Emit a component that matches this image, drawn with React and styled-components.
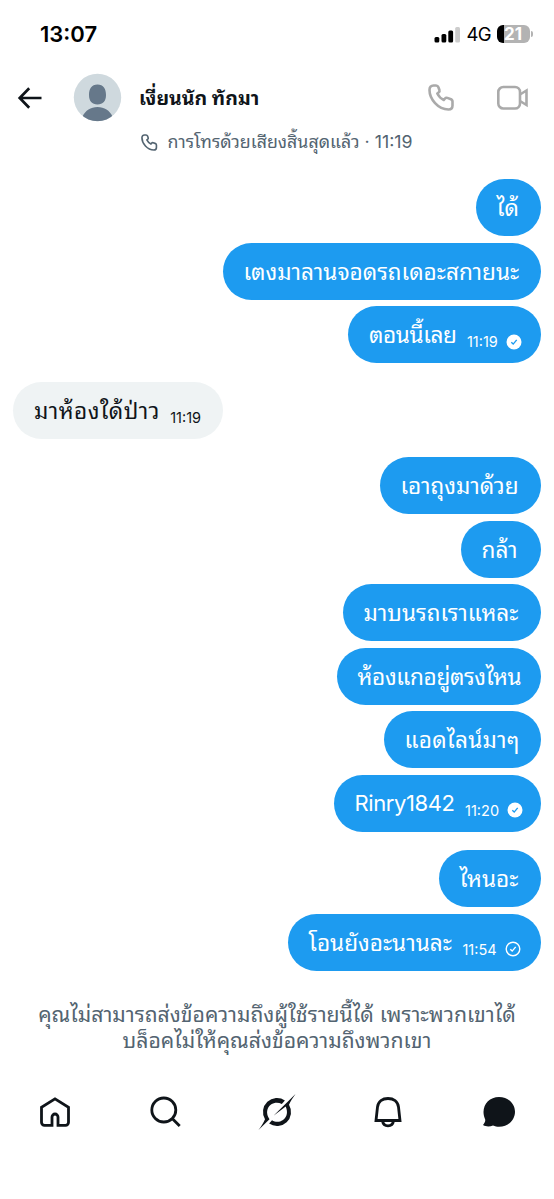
import styled, { createGlobalStyle } from 'styled-components';

const GlobalStyle = createGlobalStyle`
  * {
    box-sizing: border-box;
  }
  body {
    margin: 0;
    background: #fff;
    color: #0f1419;
    font-family: Inter, 'Noto Sans Thai Looped', Loma, Garuda, Umpush, Waree, 'Noto Sans Thai', 'Noto Sans', sans-serif;
  }
  svg {
    display: block;
    flex: none;
    overflow: visible;
  }
`
const StyledScreen = styled.div`
  display: flex;
  flex-direction: column;
  width: 554px;
  height: 1199px;
  overflow: hidden;
`
const StyledStatusBar = styled.div`
  display: flex;
  align-items: center;
  justify-content: space-between;
  height: 68px;
  padding: 0 21.5px 0 40px;
  color: #000;
`
const StyledClock = styled.div`
  font-size: 22px;
  font-weight: 600;
`
const StyledStatusIcons = styled.div`
  display: flex;
  align-items: center;
`
const StyledNetwork = styled.span`
  width: 24px;
  margin: 0 6px 0 7px;
  font-size: 18.5px;
  font-weight: 400;
  letter-spacing: -0.6px;
`
const StyledBattery = styled.div`
  width: 33px;
  height: 18px;
  border-radius: 6px;
  background: linear-gradient(to right, #000 7px, #b3b3b3 7px);
  color: #fff;
  font-size: 17px;
  font-weight: 700;
  line-height: 18px;
  text-align: center;
`
const StyledBatteryCap = styled.div`
  width: 2px;
  height: 6px;
  margin: 0 0 0 1px;
  border-radius: 0 2px 2px 0;
  background: #b3b3b3;
`
const StyledHeader = styled.div`
  display: flex;
  align-items: center;
  height: 59px;
  padding: 0 25px 0 16px;
`
const StyledAvatar = styled.div`
  margin: 0 18px 0 30px;
`
const StyledName = styled.div`
  flex: 1;
  font-size: 19.5px;
  line-height: 24px;
  font-weight: 700;
  white-space: nowrap;
`
const StyledCalls = styled.div`
  display: flex;
  align-items: center;
  gap: 41px;
`
const StyledCallEnded = styled.div`
  display: flex;
  align-items: center;
  justify-content: center;
  gap: 9px;
  height: 30px;
  color: #536471;
  font-size: 17.8px;
  line-height: 22px;
  white-space: nowrap;
`
const StyledMessages = styled.div`
  display: flex;
  flex-direction: column;
  margin: 22px 13.5px 0 13px;
`
const StyledBubble = styled.div`
  display: flex;
  align-items: center;
  align-self: ${props => props.$incoming ? 'flex-start' : 'flex-end'};
  flex: none;
  width: ${props => props.$width}px;
  height: 57px;
  margin: 0 0 ${props => props.$gap || 6.5}px;
  padding: 0 0 0 21px;
  border-radius: 29px;
  background: ${props => props.$incoming ? '#eff3f4' : '#1d9bf0'};
  color: ${props => props.$incoming ? '#0f1419' : '#fff'};
  white-space: nowrap;
`
const StyledText = styled.span`
  font-size: ${props => props.$size || 22.6}px;
  line-height: 27px;
  letter-spacing: ${props => props.$tracking || 0}px;
`
const StyledTime = styled.span`
  margin: 14px 0 0 10.5px;
  font-size: 14.5px;
`
const StyledStatus = styled.span`
  margin: 14px 0 0 8px;
`
const StyledNotice = styled.div`
  margin: 24px 0 0;
  color: #536471;
  font-size: 21.2px;
  line-height: 26px;
  text-align: center;
  white-space: nowrap;
`
const StyledTabBar = styled.div`
  display: grid;
  grid-template-columns: repeat(5, 1fr);
  align-items: center;
  justify-items: center;
  height: 60px;
  margin: 29px 0 0;
`

const PHONE = 'M1.5 6C1.5 3.2 3 1.5 5.5 1.5H8c1.3 0 2 .6 2.4 1.700l1 2.800c.4 1.100.1 1.800-.8 2.500l-1.300 1c1.500 3 3.700 5.200 6.500 6.500l1-1.300c.7-.9 1.500-1.200 2.600-.8l2.900 1c1.200.4 2.200 1.200 2.200 2.500v4.100c0 2.500-1.500 4-4 4C10 25.500 1.500 15 1.500 6z'

const PhoneIcon = ({ size, color, stroke }) => (
  <svg width={size} height={size} viewBox="0 0 27 27" fill="none" stroke={color} strokeWidth={stroke} strokeLinejoin="round">
    <path d={PHONE} />
  </svg>
)

const StatusIcon = ({ read }) => (
  <StyledStatus>
    <svg width="16" height="16" viewBox="0 0 16 16" fill="none">
      <circle cx="8" cy="8" r={read ? 7.5 : 6.8} fill={read ? '#fff' : 'none'} stroke={read ? 'none' : '#fff'} strokeWidth="1.4" />
      <path d="M5.3 8.3 7.2 10.1 10.7 5.9" stroke={read ? '#1d9bf0' : '#fff'} strokeWidth="1.4" />
    </svg>
  </StyledStatus>
)

const messages = [
  { text: 'ได้', width: 65 },
  { text: 'เตงมาลานจอดรถเดอะสกายนะ', width: 318 },
  { text: 'ตอนนี้เลย', width: 192.5, tracking: -0.4, time: '11:19', read: true, gap: 18.5 },
  { text: 'มาห้องใด้ป่าว', width: 210, tracking: 0.45, time: '11:19', incoming: true, gap: 18.5 },
  { text: 'เอาถุงมาด้วย', width: 161 },
  { text: 'กล้า', width: 80 },
  { text: 'มาบนรถเราแหละ', width: 198 },
  { text: 'ห้องแกอยู่ตรงไหน', width: 204, tracking: -0.35 },
  { text: 'แอดไลน์มาๆ', width: 157, tracking: 0.2 },
  { text: 'Rinry1842', width: 207, size: 22, tracking: -0.4, time: '11:20', read: true, gap: 18.5 },
  { text: 'ไหนอะ', width: 102 },
  { text: 'โอนยังอะนานละ', width: 253, time: '11:54' },
]

const App = () => {
  return (
    <>
      <GlobalStyle />
      <StyledScreen>
        <StyledStatusBar>
          <StyledClock>13:07</StyledClock>
          <StyledStatusIcons>
            <svg width="26" height="17" viewBox="0 0 26 17">
              <rect x="0.5" y="11" width="4.800" height="5.5" rx="1.5" />
              <rect x="7.500" y="8" width="4.800" height="8.5" rx="1.5" />
              <rect x="14.300" y="4.5" width="4.800" height="12" rx="1.5" />
              <rect x="21.200" y="1" width="4.800" height="15.5" rx="1.5" fill="#ccc" />
            </svg>
            <StyledNetwork>4G</StyledNetwork>
            <StyledBattery>21</StyledBattery>
            <StyledBatteryCap />
          </StyledStatusIcons>
        </StyledStatusBar>
        <StyledHeader>
          <svg width="27" height="24" viewBox="0 0 27 24" fill="none" stroke="#0f1419" strokeWidth="2.7">
            <path d="M25.500 12H4M13.200 2.200 3.700 12l9.500 9.800" />
          </svg>
          <StyledAvatar>
            <svg width="48" height="48" viewBox="0 0 48 48">
              <clipPath id="avatar"><circle cx="24.500" cy="23.500" r="23.7" /></clipPath>
              <g clipPath="url(#avatar)">
                <path fill="#cfd9de" d="M0-1h49v49H0z" />
                <path fill="#66788a" d="M24.500 10.500c6 0 8.500 4.500 8.500 10.500s-3 9.500-8.500 9.500S16 27 16 21s2.500-10.500 8.500-10.500zM24.500 33c7 0 12 3.500 15 9.500v5h-30v-5c3-6 8-9.500 15-9.500z" />
              </g>
            </svg>
          </StyledAvatar>
          <StyledName>เงี่ยนนัก ทักมา</StyledName>
          <StyledCalls>
            <PhoneIcon size={27} color="#aaa" stroke={2.6} />
            <svg width="33" height="26" viewBox="0 0 33 26" fill="none" stroke="#aaa" strokeWidth="2.600">
              <rect x="2.300" y="2" width="21.700" height="21.500" rx="5" />
              <path d="M24 9.500 30.500 5.500v14.500L24 16" />
            </svg>
          </StyledCalls>
        </StyledHeader>
        <StyledCallEnded>
          <PhoneIcon size={17} color="#536471" stroke={2.6} />
          การโทรด้วยเสียงสิ้นสุดแล้ว · 11:19
        </StyledCallEnded>
        <StyledMessages>
          {messages.map(item => (
            <StyledBubble key={item.text} $width={item.width} $gap={item.gap} $incoming={item.incoming}>
              <StyledText $size={item.size} $tracking={item.tracking}>{item.text}</StyledText>
              {item.time && <StyledTime>{item.time}</StyledTime>}
              {item.time && !item.incoming && <StatusIcon read={item.read} />}
            </StyledBubble>
          ))}
        </StyledMessages>
        <StyledNotice>
          คุณไม่สามารถส่งข้อความถึงผู้ใช้รายนี้ได้ เพราะพวกเขาได้<br />
          บล็อคไม่ให้คุณส่งข้อความถึงพวกเขา
        </StyledNotice>
        <StyledTabBar>
          <svg width="32" height="32" viewBox="0 0 32 32" fill="none" stroke="#0f1419" strokeWidth="2.800">
            <path d="M13 29.300H5.500a3 3 0 0 1-3-3V11.200L16 2.800l13.500 8.400v15.100a3 3 0 0 1-3 3H19V21a3 3 0 0 0-6 0z" />
          </svg>
          <svg width="32" height="32" viewBox="0 0 32 32" fill="none" stroke="#0f1419" strokeWidth="2.800">
            <circle cx="13.800" cy="14" r="12" />
            <path d="m22.200 22.500 7.500 7.500" />
          </svg>
          <svg width="36" height="36" viewBox="0 0 36 36" fill="#0f1419">
            <path d="M25.900 6.400A14 14 0 0 0 6 25.200C4.500 29 2 32.500-.5 36l11-10.700C6.500 19.500 7.800 13.800 12 10.600c3.300-2.500 7.500-2.500 10.800-.6z" />
            <path d="M10.100 29.600A14 14 0 0 0 30 10.800C31.500 7 34 3.500 36.500 0L14.500 21.800l12.200-9.200C29 18 28.300 23 24 26c-4 2.600-7.500 2.200-11 .3z" />
          </svg>
          <svg width="32" height="32" viewBox="0 0 32 32" fill="none" stroke="#0f1419" strokeWidth="2.800">
            <path d="M4 24.500 5.500 11C6.200 5.500 10.500 2.500 16 2.500S25.800 5.500 26.500 11L28 24.500zM10.500 25c.5 3 2.500 4.800 5.500 4.800s5-1.800 5.500-4.800" />
          </svg>
          <svg width="34" height="32" viewBox="0 0 34 32" fill="#0f1419">
            <path d="M17 1C8 1 1.500 7.500 1.500 16c0 3 .8 5 1.700 7.500.3 2-.7 3.500-2.200 5.500 3.500 2 7 1.500 10 .5 2 1 4 1.300 6 1.300 9 0 16-6.500 16-15S26 1 17 1z" />
          </svg>
        </StyledTabBar>
      </StyledScreen>
    </>
  );
};

export default App;
